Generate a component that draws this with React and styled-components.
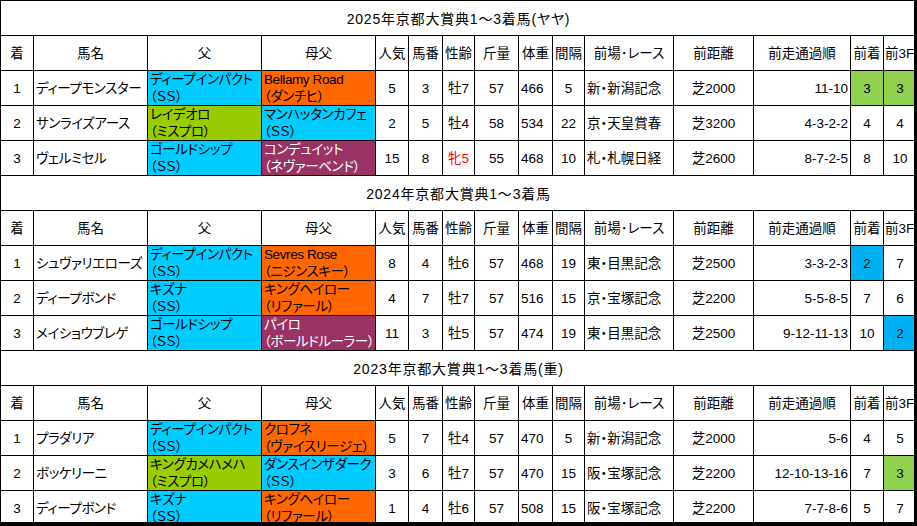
import React from 'react';
import styled, { createGlobalStyle } from 'styled-components';

const GlobalStyle = createGlobalStyle`
  html, body {
    margin: 0;
    padding: 0;
    background: #000;
  }
`

const BLUE = '#00ccff'
const ORANGE = '#ff6600'
const GREEN = '#99cc00'
const PURPLE = '#993366'
const HL_GREEN = '#92d050'
const HL_BLUE = '#00b0f0'

const Frame = styled.div`
  width: 917px;
  height: 526px;
  background: #000;
`
const Viewport = styled.div`
  width: 914px;
  height: 522px;
  overflow: hidden;
  background: #fff;
`
const Sheet = styled.table`
  width: 916px;
  table-layout: fixed;
  border-collapse: collapse;
  font-family: "Liberation Sans", "Noto Sans CJK JP", sans-serif;
  font-feature-settings: "palt";
  font-size: 13.5px;
  color: #000;
`
const Row = styled.tr`
  height: 35px;
`
const Cell = styled.td`
  border: 1px solid #000;
  padding: 0 ${ props => props.$pad || 1 }px;
  text-align: ${ props => props.$align || 'center' };
  background: ${ props => props.$bg || '#fff' };
  color: ${ props => props.$color || '#000' };
  letter-spacing: ${ props => props.$tight ? '-0.4px' : '0' };
  white-space: nowrap;
  overflow: hidden;
  line-height: 17px;
  vertical-align: middle;
`
const TitleCell = styled.td`
  border: 1px solid #000;
  text-align: center;
  font-size: 14px;
  letter-spacing: 0.8px;
`
const Pair = styled.div`
  display: flex;
  flex-direction: column;
  line-height: 17px;
`

const widths = [33, 114, 114, 114, 33, 34, 32, 44, 34, 32, 89, 80, 97, 33, 33]
const headers = ['着', '馬名', '父', '母父', '人気', '馬番', '性齢', '斤量', '体重', '間隔', '前場･レース', '前距離', '前走通過順', '前着', '前3F']

const sections = [
  {
    title: '2025年京都大賞典1～3着馬(ヤヤ)',
    rows: [
      ['1', 'ディープモンスター', ['ディープインパクト', '（ＳＳ）', BLUE], ['Bellamy Road', '（ダンチヒ）', ORANGE], '5', '3', '牡7', '57', '466', '5', '新・新潟記念', '芝2000', '11-10', ['3', HL_GREEN], ['3', HL_GREEN]],
      ['2', 'サンライズアース', ['レイデオロ', '（ミスプロ）', GREEN], ['マンハッタンカフェ', '（ＳＳ）', BLUE], '2', '5', '牡4', '58', '534', '22', '京・天皇賞春', '芝3200', '4-3-2-2', '4', '4'],
      ['3', 'ヴェルミセル', ['ゴールドシップ', '（ＳＳ）', BLUE], ['コンデュイット', '（ネヴァーベンド）', PURPLE], '15', '8', '牝5', '55', '468', '10', '札・札幌日経', '芝2600', '8-7-2-5', '8', '10'],
    ]
  },
  {
    title: '2024年京都大賞典1～3着馬',
    rows: [
      ['1', 'シュヴァリエローズ', ['ディープインパクト', '（ＳＳ）', BLUE], ['Sevres Rose', '（ニジンスキー）', ORANGE], '8', '4', '牡6', '57', '468', '19', '東・目黒記念', '芝2500', '3-3-2-3', ['2', HL_BLUE], '7'],
      ['2', 'ディープボンド', ['キズナ', '（ＳＳ）', BLUE], ['キングヘイロー', '（リファール）', ORANGE], '4', '7', '牡7', '57', '516', '15', '京・宝塚記念', '芝2200', '5-5-8-5', '7', '6'],
      ['3', 'メイショウブレゲ', ['ゴールドシップ', '（ＳＳ）', BLUE], ['パイロ', '（ボールドルーラー）', PURPLE], '11', '3', '牡5', '57', '474', '19', '東・目黒記念', '芝2500', '9-12-11-13', '10', ['2', HL_BLUE]],
    ]
  },
  {
    title: '2023年京都大賞典1～3着馬(重)',
    rows: [
      ['1', 'プラダリア', ['ディープインパクト', '（ＳＳ）', BLUE], ['クロフネ', '（ヴァイスリージェ）', ORANGE], '5', '7', '牡4', '57', '470', '5', '新・新潟記念', '芝2000', '5-6', '4', '5'],
      ['2', 'ボッケリーニ', ['キングカメハメハ', '（ミスプロ）', GREEN], ['ダンスインザダーク', '（ＳＳ）', BLUE], '3', '6', '牡7', '57', '470', '15', '阪・宝塚記念', '芝2200', '12-10-13-16', '7', ['3', HL_GREEN]],
      ['3', 'ディープボンド', ['キズナ', '（ＳＳ）', BLUE], ['キングヘイロー', '（リファール）', ORANGE], '1', '4', '牡6', '57', '508', '15', '阪・宝塚記念', '芝2200', '7-7-8-6', '5', '7'],
    ]
  },
]

// column index -> alignment of data cells
const aligns = { 1: 'left', 2: 'left', 3: 'left', 8: 'left', 10: 'left', 12: 'right' }

const BloodCell = ({ value }) => {
  const [name, line, bg] = value
  return (
    <Cell $align="left" $pad={2} $tight $bg={ bg } $color={ bg === PURPLE ? '#fff' : '#000' }>
      <Pair>
        <span>{ name }</span>
        <span>{ line }</span>
      </Pair>
    </Cell>
  )
}

const DataRow = ({ row }) => (
  <Row>
    { row.map((value, i) => {
      if (i === 2 || i === 3) return <BloodCell key={ i } value={ value } />
      if (Array.isArray(value)) {
        return <Cell key={ i } $bg={ value[1] }>{ value[0] }</Cell>
      }
      const red = i === 6 && value.startsWith('牝')
      return (
        <Cell key={ i } $align={ aligns[i] } $pad={ aligns[i] ? 2 : 1 } $tight={ i === 1 }
          $color={ red ? '#ff0000' : '#000' }>
          { value }
        </Cell>
      )
    }) }
  </Row>
)

const Section = ({ section }) => (
  <>
    <Row>
      <TitleCell colSpan={ widths.length }>{ section.title }</TitleCell>
    </Row>
    <Row>
      { headers.map((h, i) => (
        <Cell key={ h } $align={ i === headers.length - 1 ? 'left' : 'center' }>{ h }</Cell>
      )) }
    </Row>
    { section.rows.map(r => <DataRow key={ r[1] + section.title } row={ r } />) }
  </>
)

export default function App() {
  return (
    <Frame>
      <GlobalStyle />
      <Viewport>
        <Sheet>
          <colgroup>
            { widths.map((w, i) => <col key={ i } style={{ width: w }} />) }
          </colgroup>
          <tbody>
            { sections.map(s => <Section key={ s.title } section={ s } />) }
          </tbody>
        </Sheet>
      </Viewport>
    </Frame>
  )
}
